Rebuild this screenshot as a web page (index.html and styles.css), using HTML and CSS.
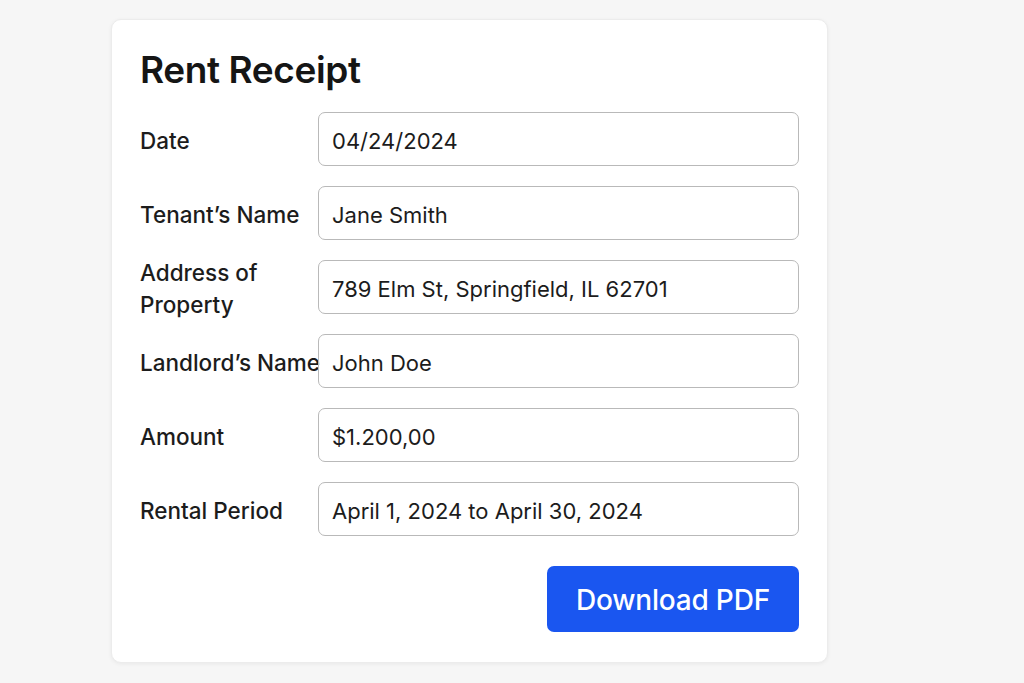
FILE: index.html
```html
<!DOCTYPE html>
<html lang="en">
<head>
<meta charset="utf-8">
<title>Rent Receipt</title>
<link rel="stylesheet" href="styles.css">
</head>
<body>
<main class="card">
  <h1 class="title">Rent Receipt</h1>
  <div class="form">
    <label class="label">Date</label>
    <div class="field">04/24/2024</div>
    <label class="label">Tenant’s Name</label>
    <div class="field">Jane Smith</div>
    <label class="label">Address of<br>Property</label>
    <div class="field">789 Elm St, Springfield, IL 62701</div>
    <label class="label nowrap">Landlord’s Name</label>
    <div class="field">John Doe</div>
    <label class="label">Amount</label>
    <div class="field">$1.200,00</div>
    <label class="label">Rental Period</label>
    <div class="field">April 1, 2024 to April 30, 2024</div>
  </div>
  <div class="actions">
    <button class="btn">Download PDF</button>
  </div>
</main>
</body>
</html>
```

FILE: styles.css
```css
html, body {
  margin: 0;
  padding: 0;
}
body {
  background: #f6f6f6;
  font-family: Inter, "Noto Sans", sans-serif;
  color: #1a1a1a;
  width: 1024px;
  height: 683px;
  overflow: hidden;
}
.card {
  box-sizing: border-box;
  margin: 19px 0 0 111px;
  width: 717px;
  height: 644px;
  background: #fff;
  border-radius: 10px;
  border: 1px solid #ececec;
  box-shadow: 0 1px 4px rgba(0,0,0,0.06);
  padding: 27px 28px 29px 28px;
}
.title {
  margin: 0 0 19px 0;
  font-size: 37px;
  font-weight: 600;
  letter-spacing: -0.4px;
  line-height: 46px;
  color: #151515;
}
.form {
  display: grid;
  grid-template-columns: 178px 1fr;
  grid-auto-rows: 54px;
  row-gap: 20px;
  align-items: center;
}
.label {
  font-size: 22.5px;
  line-height: 32px;
  font-weight: 460;
  color: #1c1c1c;
  padding-top: 3px;
}
.nowrap {
  white-space: nowrap;
}
.field {
  box-sizing: border-box;
  height: 54px;
  border: 1.5px solid #b9b9b9;
  border-radius: 7px;
  padding: 3px 13px 0 13px;
  display: flex;
  align-items: center;
  font-size: 22px;
  color: #1c1c1c;
}
.actions {
  display: flex;
  justify-content: flex-end;
  margin-top: 30px;
}
.btn {
  width: 252px;
  height: 66px;
  padding-top: 3px;
  border: none;
  border-radius: 7px;
  background: #1a56f0;
  color: #fff;
  font-family: Inter, "Noto Sans", sans-serif;
  font-size: 28px;
  font-weight: 500;
  letter-spacing: -0.2px;
}
```
